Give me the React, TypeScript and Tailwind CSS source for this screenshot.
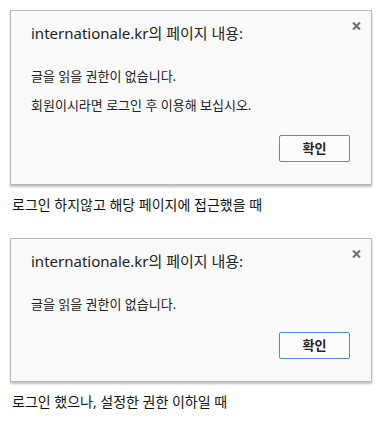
const font = { fontFamily: '"Noto Sans", "Noto Sans CJK KR", sans-serif' };

function CloseIcon() {
  return (
    <svg width="9" height="8" viewBox="0 0 9 8" className="absolute right-[10px] top-[11px]">
      <path d="M1 0.5 L8 7.5 M8 0.5 L1 7.5" stroke="#6b6b6b" strokeWidth="2" />
    </svg>
  );
}

function AlertBox({ lines, gapTop }: { lines: string[]; gapTop: string }) {
  return (
    <div className="relative w-[362px] border border-[#b9b9b9] bg-[#fafafa] shadow-[0_2px_2px_rgba(0,0,0,0.25)] pt-[12px] pl-[20px] pr-[21px] pb-[22px]">
      <CloseIcon />
      <div className="text-[15px] leading-[20px] text-[#222]">internationale.kr의 페이지 내용:</div>
      <div className="mt-[24px] flex flex-col gap-[11px] text-[13px] leading-[18px] text-[#222]">
        {lines.map((l) => (
          <div key={l}>{l}</div>
        ))}
      </div>
      <div className={`flex justify-end ${gapTop}`}>
        <button className="w-[71px] h-[27px] border border-[#4d8af0] rounded-[2px] bg-[#fcfcfc] text-[13px] font-bold text-[#222]">
          확인
        </button>
      </div>
    </div>
  );
}

export default function App() {
  return (
    <div className="w-[382px] h-[438px] bg-white pt-[10px] pl-[10px]" style={font}>
      <AlertBox lines={["글을 읽을 권한이 없습니다.", "회원이시라면 로그인 후 이용해 보십시오."]} gapTop="mt-[21px]" />
      <div className="mt-[11px] pl-[2px] text-[14px] leading-[18px] text-[#111]">로그인 하지않고 해당 페이지에 접근했을 때</div>
      <div className="mt-[24px]">
        <AlertBox lines={["글을 읽을 권한이 없습니다."]} gapTop="mt-[19px]" />
      </div>
      <div className="mt-[11px] pl-[2px] text-[14px] leading-[18px] text-[#111]">로그인 했으나, 설정한 권한 이하일 때</div>
    </div>
  );
}
